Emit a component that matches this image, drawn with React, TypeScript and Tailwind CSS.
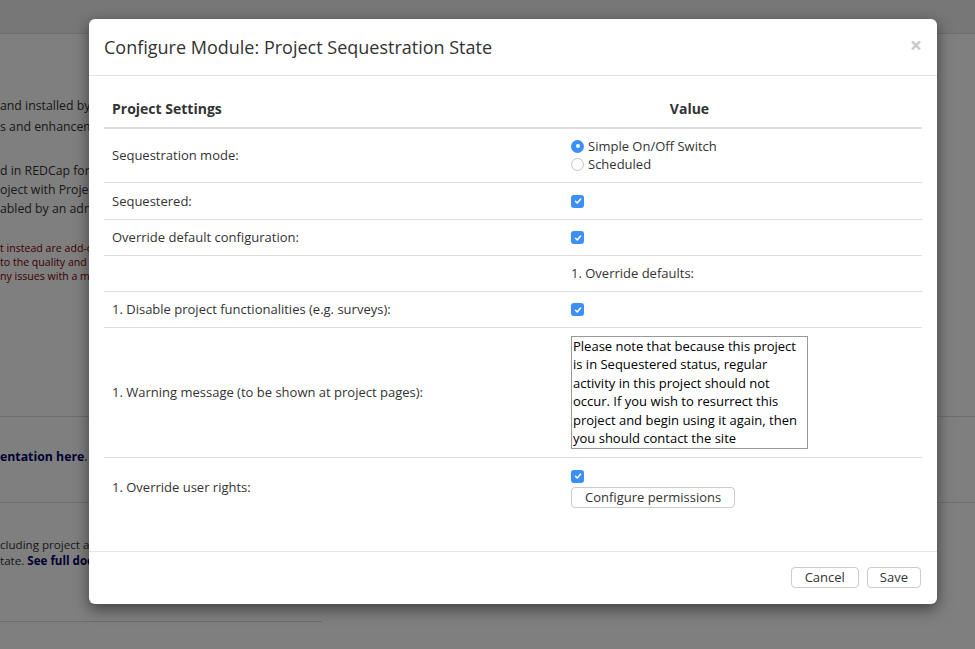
import React from "react";

const WARNING_LINES = [
  "Please note that because this project",
  "is in Sequestered status, regular",
  "activity in this project should not",
  "occur. If you wish to resurrect this",
  "project and begin using it again, then",
  "you should contact the site",
];

function Check() {
  return (
    <span className="inline-flex h-[13px] w-[13px] items-center justify-center rounded-[3px] bg-[#3b8ff6]">
      <svg viewBox="0 0 12 12" className="h-[10px] w-[10px]">
        <path d="M3 6.4 L5.1 8.5 L9.2 3.6" stroke="white" strokeWidth="1.8" fill="none" strokeLinecap="round" strokeLinejoin="round" />
      </svg>
    </span>
  );
}

function Radio({ checked }: { checked?: boolean }) {
  if (checked) {
    return (
      <span className="inline-flex h-[13px] w-[13px] items-center justify-center rounded-full bg-[#3b8ff6]">
        <span className="h-[4px] w-[4px] rounded-full bg-white" />
      </span>
    );
  }
  return <span className="inline-block h-[13px] w-[13px] rounded-full border border-[#c4c4c4] bg-white" />;
}

function Btn({ children, className = "" }: { children: React.ReactNode; className?: string }) {
  return (
    <button className={`h-[21px] rounded-[4px] border border-[#cccccc] bg-white text-[13px] leading-[19px] text-[#333] ${className}`}>
      {children}
    </button>
  );
}

export default function App() {
  return (
    <div className="relative h-[649px] w-[975px] overflow-hidden bg-white font-['Open_Sans',sans-serif] text-[#333]">
      {/* page behind the dialog */}
      <div className="h-[34px] border-b border-[#dddddd] bg-[#eeeeee]" />
      <div className="whitespace-nowrap">
        <div className="mt-[61px] w-[89px] overflow-hidden text-[12.3px] leading-[21px]">
          <p>and installed by</p>
          <p>s and enhancem</p>
        </div>
        <div className="mt-[24px] w-[89px] overflow-hidden text-[12.3px] leading-[19px]">
          <p>d in REDCap for</p>
          <p>oject with Projec</p>
          <p>abled by an adm</p>
        </div>
        <div className="mt-[23px] w-[89px] overflow-hidden text-[10.6px] leading-[14px] text-[#800000]">
          <p>t instead are add-o</p>
          <p>to the quality and</p>
          <p>ny issues with a m</p>
        </div>
        <div className="mt-[133px] border-t border-[#dddddd]" />
        <p className="mt-[30px] w-[89px] overflow-hidden text-[12.3px] leading-[19px]">
          <b className="text-[#000066]">entation here</b>.
        </p>
        <div className="mt-[36px] border-t border-[#dddddd]" />
        <div className="mt-[34px] w-[89px] overflow-hidden text-[11.6px] leading-[16px]">
          <p>cluding project ad</p>
          <p>
            tate. <b className="text-[#000066]">See full doc</b>
          </p>
        </div>
        <div className="mt-[52px] w-[322px] border-t border-[#dddddd]" />
      </div>

      {/* backdrop */}
      <div className="absolute inset-0 bg-black/50" />

      {/* dialog */}
      <div className="absolute left-[89px] top-[19px] w-[848px] rounded-[6px] bg-white shadow-[0_5px_15px_rgba(0,0,0,0.5)]">
        <div className="flex items-start justify-between border-b border-[#e5e5e5] p-[15px]">
          <h4 className="text-[18px] leading-[26px] text-[#333]">Configure Module: Project Sequestration State</h4>
          <span className="-mt-[2px] text-[21px] font-bold leading-[26px] text-[#c9c9c9]">×</span>
        </div>

        <div className="px-[15px] pt-[15px] pb-[15px]">
          <table className="mb-[20px] w-full border-collapse text-[13px] leading-[19px]">
            <colgroup>
              <col className="w-[459px]" />
              <col className="w-[252px]" />
              <col />
            </colgroup>
            <thead>
              <tr className="border-b-2 border-[#dddddd]">
                <th className="p-[8px] text-left text-[14px] leading-[20px] font-bold">Project Settings</th>
                <th className="p-[8px] text-center text-[14px] leading-[20px] font-bold">Value</th>
                <th className="p-[8px]" />
              </tr>
            </thead>
            <tbody>
              <tr className="border-b border-[#dddddd]">
                <td className="p-[8px] align-middle">Sequestration mode:</td>
                <td className="p-[8px]">
                  <div className="flex h-[18.5px] items-center gap-[4px]">
                    <Radio checked />
                    <span>Simple On/Off Switch</span>
                  </div>
                  <div className="flex h-[18.5px] items-center gap-[4px]">
                    <Radio />
                    <span>Scheduled</span>
                  </div>
                </td>
                <td />
              </tr>
              <tr className="border-b border-[#dddddd]">
                <td className="p-[8px]">Sequestered:</td>
                <td className="p-[8px]">
                  <div className="flex h-[20px] items-center"><Check /></div>
                </td>
                <td />
              </tr>
              <tr className="border-b border-[#dddddd]">
                <td className="p-[8px]">Override default configuration:</td>
                <td className="p-[8px]">
                  <div className="flex h-[19px] items-center"><Check /></div>
                </td>
                <td />
              </tr>
              <tr className="border-b border-[#dddddd]">
                <td className="p-[8px]" />
                <td className="p-[8px]">1. Override defaults:</td>
                <td />
              </tr>
              <tr className="border-b border-[#dddddd]">
                <td className="p-[8px]">1. Disable project functionalities (e.g. surveys):</td>
                <td className="p-[8px]">
                  <div className="flex h-[19px] items-center"><Check /></div>
                </td>
                <td />
              </tr>
              <tr className="border-b border-[#dddddd]">
                <td className="p-[8px] align-middle">1. Warning message (to be shown at project pages):</td>
                <td className="p-[8px]">
                  <div className="h-[113px] w-[237px] overflow-hidden border border-[#999999] px-[1px] text-[13px] leading-[18.4px] text-black">
                    {WARNING_LINES.map((line) => (
                      <div key={line} className="whitespace-nowrap">{line}</div>
                    ))}
                  </div>
                </td>
                <td />
              </tr>
              <tr>
                <td className="p-[8px] align-middle">1. Override user rights:</td>
                <td className="p-[8px]">
                  <div className="flex h-[20px] items-center"><Check /></div>
                  <Btn className="mt-[1px] px-[13px]">Configure permissions</Btn>
                </td>
                <td />
              </tr>
            </tbody>
          </table>
        </div>

        <div className="flex justify-end gap-[8px] border-t border-[#e5e5e5] pt-[15px] pr-[16px] pb-[16px] pl-[15px]">
          <Btn className="px-[13px]">Cancel</Btn>
          <Btn className="px-[12px]">Save</Btn>
        </div>
      </div>
    </div>
  );
}
